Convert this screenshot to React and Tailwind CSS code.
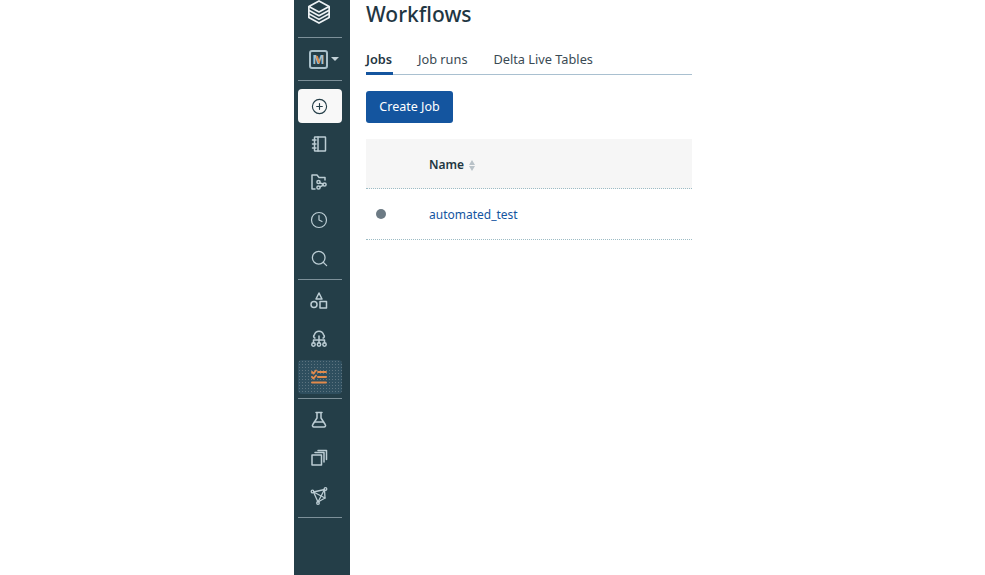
import { Clock, Search, CirclePlus } from "lucide-react";

const stroke = "#bccdd4";

function Divider({ className = "" }) {
  return <div className={`h-px w-11 shrink-0 bg-[#7d9099] ${className}`} />;
}

function NavIcon({ children }) {
  return <div className="h-[38px] w-full shrink-0 flex items-center justify-center pr-[2px]">{children}</div>;
}

function Svg({ children, color = stroke, width = 1.5 }) {
  return (
    <svg width="18" height="18" viewBox="0 0 18 18" fill="none" stroke={color} strokeWidth={width} strokeLinecap="round" strokeLinejoin="round">
      {children}
    </svg>
  );
}

function Logo() {
  return (
    <svg width="24" height="24" viewBox="0 0 26 26" fill="none" stroke="#eef3f5" strokeWidth="1.8" strokeLinejoin="round">
      <path d="M13 1 L24 7 L13 13 L2 7 Z" />
      <path d="M2 7 V11 L13 17 L24 11 V7" />
      <path d="M2 11 V15 L13 21 L24 15 V11" />
      <path d="M2 15 V19 L13 25 L24 19 V15" />
    </svg>
  );
}

export default function App() {
  return (
    <div className="flex h-screen bg-white overflow-hidden font-['Noto_Sans','Open_Sans',sans-serif] pl-[294px]">
      {/* Sidebar */}
      <aside className="w-14 shrink-0 bg-[#243e48] flex flex-col items-center pr-1">
        <div className="h-[37px] w-full flex justify-center overflow-hidden shrink-0 pr-[3px]">
          <Logo />
        </div>
        <Divider />
        <div className="h-[42px] w-full shrink-0 flex items-center justify-center gap-[3px] pl-[8px]">
          <div className="relative w-[19px] h-[19px] rounded-[3px] border-2 border-[#a9c0ca] flex items-center justify-center text-[13px] font-bold leading-none text-[#a9c0ca]">
            M
            <span className="absolute left-[6px] top-[4px] w-[2px] h-[7px] bg-[#d98a4e] rotate-[-20deg]" />
          </div>
          <div className="w-0 h-0 border-x-[4px] border-x-transparent border-t-[4px] border-t-[#c3d2d8]" />
        </div>
        <Divider />
        <div className="mt-2 w-11 h-[34px] shrink-0 rounded bg-[#f8f8f8] flex items-center justify-center pr-[2px]">
          <CirclePlus size={17} strokeWidth={1.6} color="#243e48" />
        </div>
        <div className="h-[2px] shrink-0" />
        <NavIcon>
          <Svg>
            <rect x="4.5" y="2" width="11" height="14" rx="0.5" />
            <path d="M8 2 V16 M2.5 5 H6 M2.5 9 H6 M2.5 13 H6" />
          </Svg>
        </NavIcon>
        <NavIcon>
          <Svg>
            <path d="M5 16 H2 V2 H7 L9 4.5 H15 V7" />
            <circle cx="8.5" cy="9" r="1.6" />
            <circle cx="8.5" cy="14.5" r="1.6" />
            <circle cx="14.5" cy="11.5" r="1.6" />
            <path d="M10 10 L13 11 M10 13.7 L13 12.4" />
          </Svg>
        </NavIcon>
        <NavIcon>
          <Clock size={18} strokeWidth={1.6} color={stroke} />
        </NavIcon>
        <NavIcon>
          <Search size={19} strokeWidth={1.6} color={stroke} />
        </NavIcon>
        <Divider className="mt-[2px]" />
        <div className="h-[2px] shrink-0" />
        <NavIcon>
          <Svg>
            <path d="M9 1 L12 7 H6 Z" />
            <circle cx="4" cy="12.5" r="3" />
            <rect x="10" y="9.5" width="6.5" height="6.5" />
          </Svg>
        </NavIcon>
        <NavIcon>
          <Svg>
            <path d="M5 8 H4.5 A2.5 2.5 0 0 1 4.5 4.5 A4.7 4.7 0 0 1 13.5 4.5 A2.5 2.5 0 0 1 13.5 8 H13" />
            <path d="M3.5 13 V10 H14.5 V13 M9 6 V13" />
            <circle cx="3.5" cy="14.5" r="1.7" />
            <circle cx="9" cy="14.5" r="1.7" />
            <circle cx="14.5" cy="14.5" r="1.7" />
          </Svg>
        </NavIcon>
        <div className="w-11 h-[34px] shrink-0 mt-[2px] rounded-sm bg-[#2f4f5f] bg-[radial-gradient(#5d7480_0.6px,transparent_0.7px)] bg-[length:3px_3px] flex items-center justify-center pr-[2px]">
          <Svg color="#e38a4b" width="1.9">
            <path d="M2 4 L3.5 5.5 L6 2.5 M2 9 L3.5 10.5 L6 7.5 M8 4 H16 M8 9 H16 M2 14.5 H16" />
          </Svg>
        </div>
        <Divider className="mt-[4px]" />
        <div className="h-[2px] shrink-0" />
        <NavIcon>
          <Svg>
            <path d="M6 1.5 H12 M7 1.5 V7 L2.8 13.5 A1.5 1.5 0 0 0 4 16 H14 A1.5 1.5 0 0 0 15.2 13.5 L11 7 V1.5" />
            <path d="M4.5 11 H13.5" />
          </Svg>
        </NavIcon>
        <NavIcon>
          <Svg>
            <rect x="2" y="6" width="9.5" height="10" />
            <path d="M5 3.5 H14 V13 M8 1.5 H16.5 V10.5" />
          </Svg>
        </NavIcon>
        <NavIcon>
          <Svg width="1.3">
            <path d="M3.5 5 L14.5 2.5 L8 15 Z" />
            <path d="M3.5 5 L15 11 L8 15" />
            <path d="M14.5 2.5 L15 11" />
            <circle cx="2.5" cy="4.5" r="1.3" />
            <circle cx="15.5" cy="2" r="1.3" />
            <circle cx="8" cy="16" r="1.3" />
          </Svg>
        </NavIcon>
        <Divider className="mt-[2px]" />
      </aside>

      {/* Main */}
      <main className="w-[326px] ml-4 shrink-0">
        <h1 className="h-[28px] text-[21px] leading-[29px] font-medium text-[#1f3642]">Workflows</h1>
        <div className="mt-[18px] flex gap-[25px] border-b border-[#a9c0d0] h-[29px] text-[12.75px] leading-[26px] text-[#3a4a54]">
          <div className="w-[27px] h-[29px] border-b-[3px] border-[#14559f] font-semibold text-[#1f3642]">Jobs</div>
          <div>Job runs</div>
          <div className="ml-px">Delta Live Tables</div>
        </div>
        <button className="mt-4 block w-[87px] h-8 rounded-[3px] bg-[#14559f] text-white text-[12.5px]">Create Job</button>
        <div className="mt-4 h-[50px] bg-[#f6f6f6] border-b border-dotted border-[#9dbcc5] flex items-center pl-[63px] gap-[5px] pt-[3px]">
          <span className="text-[12px] font-semibold text-[#1f3642]">Name</span>
          <span className="flex flex-col gap-[1px]">
            <span className="w-0 h-0 border-x-[3.5px] border-x-transparent border-b-[5px] border-b-[#b9c2c8]" />
            <span className="w-0 h-0 border-x-[3.5px] border-x-transparent border-t-[5px] border-t-[#b9c2c8]" />
          </span>
        </div>
        <div className="h-[51px] border-b border-dotted border-[#9dbcc5] flex items-center pl-[10px]">
          <span className="w-[10px] h-[10px] rounded-full bg-[#6c7a84]" />
          <span className="ml-[43px] text-[12px] text-[#14559f] pt-[1px]">automated_test</span>
        </div>
      </main>
    </div>
  );
}
